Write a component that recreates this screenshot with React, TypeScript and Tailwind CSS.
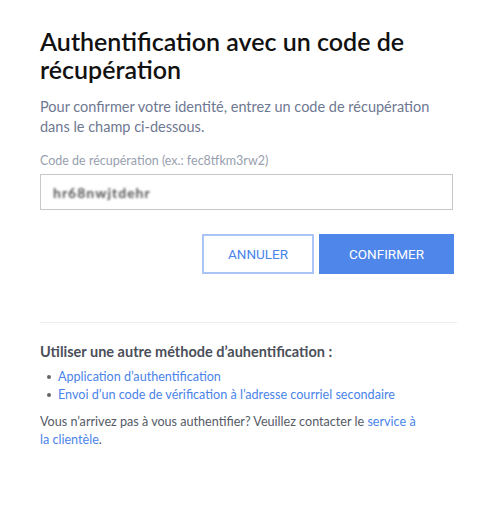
export default function App() {
  return (
    <div className="min-h-[517px] bg-white px-10 pt-[27px] font-['Lato',sans-serif]">
      <h1 className="text-[25px] leading-[28px] font-semibold text-[#111111]">
        Authentification avec un code de récupération
      </h1>
      <p className="mt-[14px] text-[14.5px] leading-[20px] text-[#6e7891]">
        Pour confirmer votre identité, entrez un code de récupération dans le champ ci-dessous.
      </p>

      <label className="mt-[16px] block text-[12.5px] leading-[16px] text-[#98a0ae]">
        Code de récupération (ex.: fec8tfkm3rw2)
      </label>
      <div className="mt-[5px] mr-[4px] flex h-[36px] items-center border border-[#c8c8c8] px-3">
        <span className="text-[14px] font-bold tracking-[1px] text-[#555555] blur-[0.9px]">hr68nwjtdehr</span>
      </div>

      <div className="mt-[24px] mr-[3px] flex justify-end gap-[5px] font-['Roboto',sans-serif] text-[13.5px]">
        <button className="h-[40px] w-[112px] border-2 border-[#a9c4f5] text-[#4a84ea]">ANNULER</button>
        <button className="h-[40px] w-[135px] bg-[#4f86ea] text-white">CONFIRMER</button>
      </div>

      <div className="mt-[48px] h-px bg-[#ececec]" />

      <h2 className="mt-[19px] text-[14.5px] leading-[20px] font-bold text-[#4b4f5a]">
        Utiliser une autre méthode d’auhentification :
      </h2>
      <ul className="mt-[6px] text-[12.6px] leading-[18px] text-[#4a84ea]">
        <li className="flex items-center gap-[7px] pl-[7px]">
          <span className="h-[4px] w-[4px] rounded-full bg-[#666]" />
          <a>Application d’authentification</a>
        </li>
        <li className="flex items-center gap-[7px] pl-[7px]">
          <span className="h-[4px] w-[4px] rounded-full bg-[#666]" />
          <a>Envoi d’un code de vérification à l’adresse courriel secondaire</a>
        </li>
      </ul>
      <p className="mt-[9px] w-[382px] text-[12.6px] leading-[18px] text-[#555a66]">
        Vous n’arrivez pas à vous authentifier? Veuillez contacter le{' '}
        <a className="text-[#4a84ea]">service à la clientèle</a>.
      </p>
    </div>
  );
}
